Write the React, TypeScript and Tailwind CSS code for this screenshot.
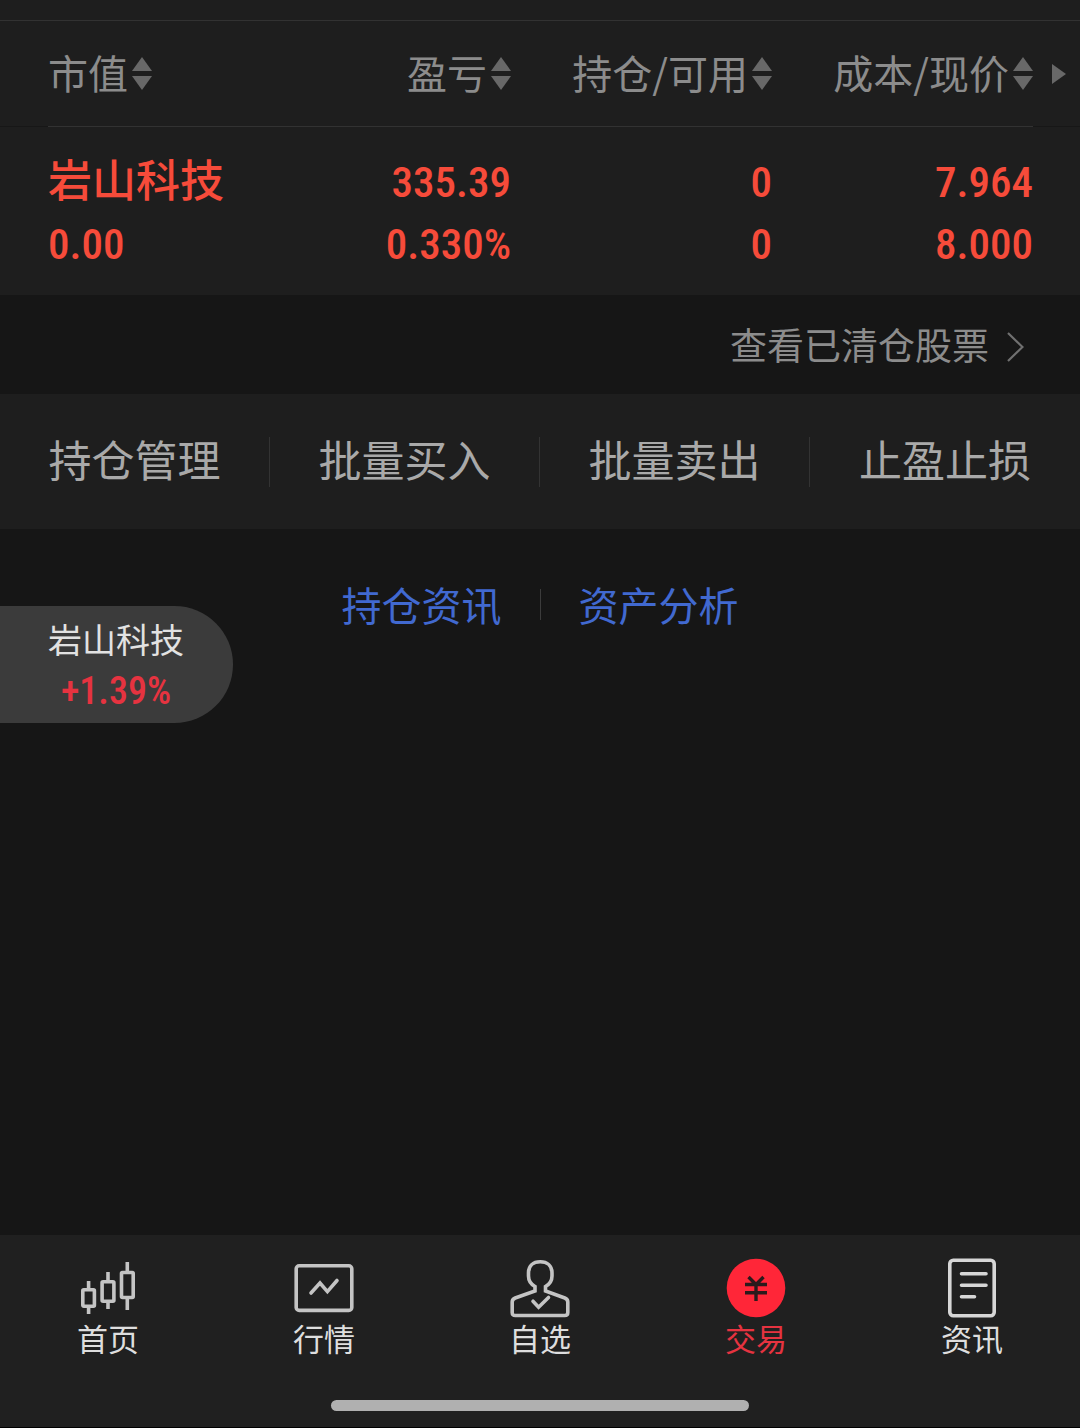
import { useState } from 'react';
import type { ReactNode } from 'react';

const COLUMNS = ['市值', '盈亏', '持仓/可用', '成本/现价'];

interface Holding {
  name: string;
  marketValue: string;
  profit: string;
  profitRate: string;
  position: string;
  available: string;
  cost: string;
  price: string;
}

const HOLDINGS: Holding[] = [
  {
    name: '岩山科技',
    marketValue: '0.00',
    profit: '335.39',
    profitRate: '0.330%',
    position: '0',
    available: '0',
    cost: '7.964',
    price: '8.000',
  },
];

const ACTIONS = ['持仓管理', '批量买入', '批量卖出', '止盈止损'];

function SortIcon() {
  return (
    <svg width="20" height="34" viewBox="0 0 20 34" className="fill-[#686868]" aria-hidden="true">
      <path d="M10 0L20 14H0z" />
      <path d="M0 19H20L10 33z" />
    </svg>
  );
}

function CandleIcon() {
  return (
    <svg width="60" height="60" viewBox="0 0 60 60" fill="none" stroke="#c4c4c4" strokeWidth="3.6">
      <rect x="4.8" y="31.8" width="11.6" height="16.4" rx="1" />
      <path d="M10.6 23v8M10.6 49v7" />
      <rect x="24.1" y="23.8" width="11.8" height="19.4" rx="1" />
      <path d="M30 14v9M30 44v7" />
      <rect x="43.5" y="14.5" width="11.7" height="25" rx="1" />
      <path d="M49.3 4v10M49.3 40v12" />
    </svg>
  );
}

function MarketIcon() {
  return (
    <svg width="60" height="60" viewBox="0 0 60 60" fill="none" stroke="#c4c4c4" strokeWidth="3.6">
      <rect x="2.2" y="7.8" width="55.6" height="44.6" rx="3" />
      <path d="M17 35l9-10 7.400 8.600L43 22.500" strokeLinecap="round" />
    </svg>
  );
}

function WatchlistIcon() {
  return (
    <svg width="60" height="60" viewBox="0 0 60 60" fill="none" stroke="#c4c4c4" strokeWidth="3.6">
      <path d="M25 33v-4.500C20.500 26 18.500 22 18.500 18v-3C18.500 8 23 3.800 30.200 3.800S42 8 42 15v3c0 4-2 8-6.500 10.500V33l19.300 7c2 .8 3 2 3 4v10.500c0 2-1 3-3 3H5.200c-2 0-3-1-3-3V44c0-2 1-3.200 3-4z" />
      <path d="M23 43.200l5.600 6L38.500 39.500" strokeLinecap="round" />
    </svg>
  );
}

function TradeIcon() {
  return (
    <svg width="60" height="60" viewBox="0 0 60 60" fill="none">
      <circle cx="30" cy="30" r="29.300" fill="#ff2638" />
      <path d="M22.500 19l7.500 7.500 7.500-7.500M30 26v17M19 26.500h22M19 34.700h22" stroke="#2b1a1c" strokeWidth="3.4" />
    </svg>
  );
}

function NewsIcon() {
  return (
    <svg width="60" height="60" viewBox="0 0 60 60" fill="none" stroke="#d6d6d6" strokeWidth="3.6">
      <rect x="7.800" y="2.300" width="44.400" height="55.400" rx="3.500" />
      <path d="M19.500 15.700h24.500M19.500 27.200h24.500M19.500 38.800h13" strokeLinecap="round" />
    </svg>
  );
}

const TABS: { label: string; icon: ReactNode }[] = [
  { label: '首页', icon: <CandleIcon /> },
  { label: '行情', icon: <MarketIcon /> },
  { label: '自选', icon: <WatchlistIcon /> },
  { label: '交易', icon: <TradeIcon /> },
  { label: '资讯', icon: <NewsIcon /> },
];

function HoldingsTable() {
  return (
    <table className="w-full table-fixed border-separate border-spacing-0 border-t border-[#323232] text-right">
      <colgroup>
        <col className="w-12" />
        <col />
        <col />
        <col className="w-[261px]" />
        <col className="w-[261px]" />
        <col className="w-[47px]" />
      </colgroup>
      <thead>
        <tr className="h-[106px]">
          <td className="border-b border-[#171717]" />
          {COLUMNS.map((title) => (
            <th key={title} className="border-b border-[#323232] p-0 font-normal first-of-type:text-left">
              <button className="inline-flex items-center gap-1 text-[40px] leading-[60px] whitespace-nowrap text-[#8c8c8c]">
                <span className="pb-1">{title}</span>
                <SortIcon />
              </button>
            </th>
          ))}
          <td className="border-b border-[#171717] p-0 text-left">
            <button aria-label="更多列" className="ml-[19px] block">
              <svg width="14" height="20" viewBox="0 0 14 20" className="fill-[#686868]">
                <path d="M0 0L14 10L0 20z" />
              </svg>
            </button>
          </td>
        </tr>
      </thead>
      <tbody>
        {HOLDINGS.map((h) => (
          <tr
            key={h.name}
            className="font-['Roboto_Condensed',Roboto,'Noto_Sans_CJK_SC',sans-serif] text-[43px] leading-[62px] font-medium text-[#f64b3a]"
          >
            <td />
            <td className="p-0 pt-6 pb-5 text-left whitespace-nowrap">
              <div className="pb-2 font-['Noto_Sans_CJK_SC',sans-serif] text-[44px] leading-[54px]">{h.name}</div>
              <div>{h.marketValue}</div>
            </td>
            <td className="p-0 pt-6 pb-5">
              <div>{h.profit}</div>
              <div>{h.profitRate}</div>
            </td>
            <td className="p-0 pt-6 pb-5">
              <div>{h.position}</div>
              <div>{h.available}</div>
            </td>
            <td className="p-0 pt-6 pb-5">
              <div>{h.cost}</div>
              <div>{h.price}</div>
            </td>
            <td />
          </tr>
        ))}
      </tbody>
    </table>
  );
}

export default function App() {
  const [active, setActive] = useState('交易');

  return (
    <div className="flex min-h-screen flex-col bg-[#161616] font-['Noto_Sans_CJK_SC',sans-serif]">
      <section className="bg-[#1e1e1e] pt-5">
        <HoldingsTable />
      </section>

      <div className="flex h-[99px] items-center justify-end pr-14">
        <a href="#cleared" className="flex items-center gap-[18px] text-[37px] text-[#8c8c8c]">
          查看已清仓股票
          <svg width="17" height="30" viewBox="0 0 17 30" fill="none" stroke="#707070" strokeWidth="2.2" className="mt-1">
            <path d="M1 1l14.500 14L1 29" />
          </svg>
        </a>
      </div>

      <div className="grid h-[135px] grid-cols-4 items-center bg-[#1e1e1e]">
        {ACTIONS.map((action) => (
          <button
            key={action}
            className="h-[50px] border-r border-[#333333] pb-2 text-[43px] leading-[42px] text-[#a9a9a9] last:border-r-0"
          >
            {action}
          </button>
        ))}
      </div>

      <main className="relative flex-1">
        <div className="flex items-center justify-center gap-[38px] pt-[45px] text-[40px] leading-[60px] text-[#4169d0]">
          <a href="#news">持仓资讯</a>
          <span className="h-[31px] w-px bg-[#3c3c3c]" />
          <a href="#analysis">资产分析</a>
        </div>

        {/* 悬浮行情 */}
        <button className="absolute top-[77px] left-0 flex h-[117px] flex-col items-center justify-center rounded-r-full bg-[#3b3b3b] pr-[49px] pl-12 leading-[52px]">
          <span className="text-[34px] text-[#e2e2e2]">岩山科技</span>
          <span className="font-['Roboto_Condensed',Roboto,sans-serif] text-[38px] font-medium text-[#e63340]">
            +1.39%
          </span>
        </button>
      </main>

      <footer className="border-b border-black bg-[#202020] pt-[23px] pb-4">
        <nav className="grid grid-cols-5">
          {TABS.map(({ label, icon }) => (
            <button
              key={label}
              onClick={() => setActive(label)}
              className={`flex flex-col items-center text-[31px] leading-[40px] ${
                active === label ? 'text-[#e63340]' : 'text-[#dedede]'
              }`}
            >
              {icon}
              {label}
            </button>
          ))}
        </nav>
        <div className="mx-auto mt-[42px] h-[11px] w-[418px] rounded-full bg-[#b0b0b0]" />
      </footer>
    </div>
  );
}
